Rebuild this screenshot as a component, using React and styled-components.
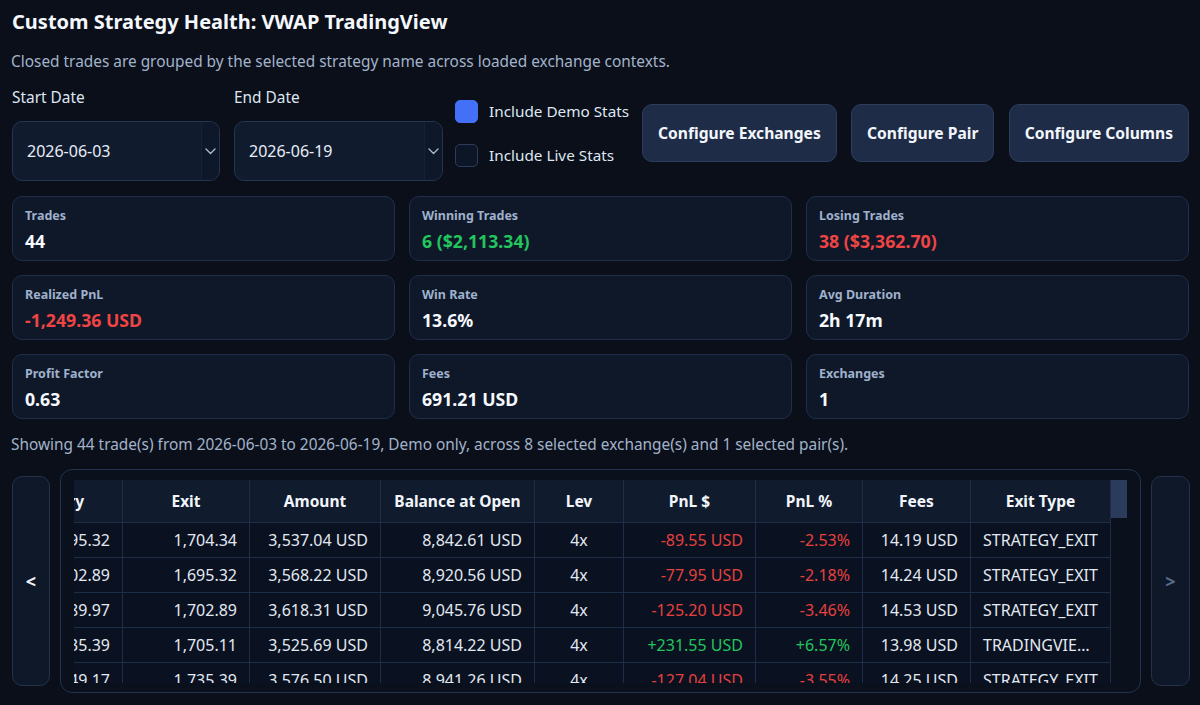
import React, { useEffect, useRef } from 'react';
import styled, { createGlobalStyle } from 'styled-components';

const GlobalStyle = createGlobalStyle`
  html, body { margin: 0; padding: 0; background: #0a0f1a; }
  body {
    font-family: "Noto Sans", "Open Sans", "Liberation Sans", sans-serif;
    color: #eef3fa;
  }
  * { box-sizing: border-box; }
`;

const Page = styled.div`
  padding: 8px 10px 12px 12px;
  display: flex;
  flex-direction: column;
`;

const Title = styled.h1`
  margin: 0;
  font-size: 20px;
  line-height: 28px;
  font-weight: 700;
  color: #f4f7fb;
`;

const Subtitle = styled.p`
  margin: 15px 0 0 -1px;
  font-size: 15.4px;
  line-height: 22px;
  color: #a3b3ca;
`;

const Controls = styled.div`
  margin: 14px 1px 0 0;
  display: flex;
  align-items: flex-start;
`;

const DateField = styled.div`
  width: ${p => p.$w}px;
  flex: none;
  margin-right: 14px;
  display: flex;
  flex-direction: column;
  gap: 12px;
`;

const FieldLabel = styled.span`
  font-size: 15.4px;
  line-height: 22px;
  color: #dfe7f2;
`;

const DateBox = styled.div`
  height: 60px;
  border: 1px solid #243552;
  border-radius: 10px;
  background: #111b2e;
  display: flex;
  align-items: stretch;
  overflow: hidden;
`;

const DateText = styled.span`
  flex: 1;
  display: flex;
  align-items: center;
  padding-left: 14px;
  font-size: 16px;
  color: #e8eef7;
`;

const PickerStrip = styled.span`
  width: 18px;
  display: flex;
  align-items: center;
  justify-content: center;
  background: #0e1829;
  border-left: 1px solid #15213a;
`;

const Checks = styled.div`
  flex: none;
  margin-top: 13px;
  margin-left: -2px;
  display: flex;
  flex-direction: column;
  gap: 21px;
  margin-right: 13px;
`;

const CheckRow = styled.label`
  display: flex;
  align-items: center;
  gap: 11px;
  font-size: 15.3px;
  line-height: 23px;
  white-space: nowrap;
  color: #dfe7f2;
`;

const Box = styled.span`
  width: 23px;
  height: 23px;
  flex: none;
  border-radius: 5px;
  border: 1px solid ${p => (p.$on ? '#4470f7' : '#2c3d5c')};
  background: ${p => (p.$on ? '#4470f7' : '#0d1627')};
`;

const Buttons = styled.div`
  margin-top: 17px;
  flex: 1;
  min-width: 0;
  display: flex;
  justify-content: space-between;
  gap: 12px;
`;

const ActionButton = styled.button`
  height: 58px;
  padding: 0 15px;
  border-radius: 10px;
  border: 1px solid #2c3d5e;
  background: #1f2c48;
  color: #f2f6fb;
  font-family: inherit;
  font-size: 15.6px;
  font-weight: 700;
  white-space: nowrap;
`;

const StatGrid = styled.div`
  margin: 15px 1px 0 0;
  display: grid;
  grid-template-columns: repeat(3, 1fr);
  gap: 14px;
`;

const StatCard = styled.div`
  border: 1px solid #1f2f4a;
  border-radius: 10px;
  background: #0f1829;
  padding: 10px 12px 7.5px;
  display: flex;
  flex-direction: column;
  gap: 3.5px;
`;

const StatLabel = styled.span`
  font-size: 12.5px;
  line-height: 18px;
  font-weight: 700;
  color: #9fb1cc;
`;

const toneColor = { pos: '#22c55e', neg: '#ef4444', plain: '#f6f9fd' };

const StatValue = styled.span`
  font-size: 17.7px;
  line-height: 24px;
  font-weight: 700;
  color: ${p => toneColor[p.$tone || 'plain']};
`;

const Status = styled.p`
  margin: 15px 0 0 -1px;
  font-size: 15.4px;
  line-height: 22px;
  color: #a3b3ca;
`;

const TableArea = styled.div`
  margin-top: 13px;
  display: flex;
  align-items: center;
  gap: 10px;
`;

const NavButton = styled.button`
  width: ${p => p.$w}px;
  height: 210px;
  flex: none;
  border-radius: 10px;
  border: 1px solid #22324d;
  background: #0f1829;
  color: ${p => (p.$dim ? '#5a6c89' : '#eef3fa')};
  font-family: inherit;
  font-size: 18px;
  font-weight: 700;
  padding: 0;
`;

const Frame = styled.div`
  flex: 1;
  min-width: 0;
  height: 224px;
  border: 1px solid #23334e;
  border-radius: 12px;
  background: #0a101c;
  padding: 10px 13px 9px;
  display: flex;
`;

const Scroller = styled.div`
  flex: 1;
  min-width: 0;
  height: 100%;
  overflow: hidden;
`;

const ScrollTrack = styled.div`
  width: 16px;
  flex: none;
  display: flex;
  flex-direction: column;
`;

const ScrollThumb = styled.div`
  height: 38px;
  background: #2a3b5c;
`;

const Table = styled.table`
  border-collapse: collapse;
  table-layout: fixed;
  font-size: 16px;
`;

const HeadCell = styled.th`
  height: 42px;
  padding: 0 12px;
  background: #101b2e;
  border: 1px solid #1f2e48;
  border-top: none;
  color: #f2f6fb;
  font-size: 15.5px;
  font-weight: 700;
  text-align: center;
  white-space: nowrap;
  overflow: hidden;
`;

const cellColor = { pos: '#22c55e', neg: '#e5413f', plain: '#e3e9f2' };

const Cell = styled.td`
  height: 35px;
  padding: 0 12px;
  background: #0a1120;
  border: 1px solid #1f2e48;
  color: ${p => cellColor[p.$tone || 'plain']};
  text-align: ${p => p.$align || 'right'};
  white-space: nowrap;
  overflow: hidden;
  text-overflow: ellipsis;
`;

const Chevron = () => (
  <svg width="11" height="7" viewBox="0 0 11 7" fill="none">
    <path d="M1 1l4.5 4.5L10 1" stroke="#aab8cc" strokeWidth="1.4" strokeLinecap="round" strokeLinejoin="round" />
  </svg>
);

const stats = [
  { label: 'Trades', value: '44' },
  { label: 'Winning Trades', value: '6 ($2,113.34)', tone: 'pos' },
  { label: 'Losing Trades', value: '38 ($3,362.70)', tone: 'neg' },
  { label: 'Realized PnL', value: '-1,249.36 USD', tone: 'neg' },
  { label: 'Win Rate', value: '13.6%' },
  { label: 'Avg Duration', value: '2h 17m' },
  { label: 'Profit Factor', value: '0.63' },
  { label: 'Fees', value: '691.21 USD' },
  { label: 'Exchanges', value: '1' },
];

const columns = [
  { key: 'closed', label: 'Closed At', w: 170, align: 'left' },
  { key: 'exchange', label: 'Exchange', w: 130, align: 'left' },
  { key: 'pair', label: 'Pair', w: 110, align: 'left' },
  { key: 'side', label: 'Side', w: 80, align: 'center' },
  { key: 'entry', label: 'Entry', w: 118 },
  { key: 'exit', label: 'Exit', w: 127 },
  { key: 'amount', label: 'Amount', w: 131 },
  { key: 'balance', label: 'Balance at Open', w: 154 },
  { key: 'lev', label: 'Lev', w: 89, align: 'center' },
  { key: 'pnl', label: 'PnL $', w: 132, tone: true },
  { key: 'pct', label: 'PnL %', w: 107, tone: true },
  { key: 'fees', label: 'Fees', w: 108 },
  { key: 'type', label: 'Exit Type', w: 140, align: 'left' },
];

const tableWidth = columns.reduce((sum, c) => sum + c.w, 0);

const rows = [
  ['2026-06-19 14:05', 'Bybit Demo', 'ETHUSDT', 'Long', '1,695.32', '1,704.34', '3,537.04 USD', '8,842.61 USD', '4x', '-89.55 USD', '-2.53%', '14.19 USD', 'STRATEGY_EXIT'],
  ['2026-06-19 09:41', 'Bybit Demo', 'ETHUSDT', 'Short', '1,702.89', '1,695.32', '3,568.22 USD', '8,920.56 USD', '4x', '-77.95 USD', '-2.18%', '14.24 USD', 'STRATEGY_EXIT'],
  ['2026-06-18 21:17', 'Bybit Demo', 'ETHUSDT', 'Long', '1,689.97', '1,702.89', '3,618.31 USD', '9,045.76 USD', '4x', '-125.20 USD', '-3.46%', '14.53 USD', 'STRATEGY_EXIT'],
  ['2026-06-18 12:52', 'Bybit Demo', 'ETHUSDT', 'Short', '1,735.39', '1,705.11', '3,525.69 USD', '8,814.22 USD', '4x', '+231.55 USD', '+6.57%', '13.98 USD', 'TRADINGVIEW_SIGNAL_EXIT'],
  ['2026-06-17 18:30', 'Bybit Demo', 'ETHUSDT', 'Long', '1,749.17', '1,735.39', '3,576.50 USD', '8,941.26 USD', '4x', '-127.04 USD', '-3.55%', '14.25 USD', 'STRATEGY_EXIT'],
  ['2026-06-17 10:03', 'Bybit Demo', 'ETHUSDT', 'Short', '1,741.60', '1,749.17', '3,590.12 USD', '8,975.30 USD', '4x', '-62.48 USD', '-1.74%', '14.31 USD', 'STRATEGY_EXIT'],
];

const toneOf = v => (v.startsWith('+') ? 'pos' : v.startsWith('-') ? 'neg' : 'plain');

export default function App() {
  const scrollRef = useRef(null);

  useEffect(() => {
    // The grid opens scrolled to its last columns
    const el = scrollRef.current;
    if (el) el.scrollLeft = el.scrollWidth - el.clientWidth;
  }, []);

  return (
    <>
      <GlobalStyle />
      <Page>
        <Title>Custom Strategy Health: VWAP TradingView</Title>
        <Subtitle>Closed trades are grouped by the selected strategy name across loaded exchange contexts.</Subtitle>

        <Controls>
          <DateField $w={208}>
            <FieldLabel>Start Date</FieldLabel>
            <DateBox>
              <DateText>2026-06-03</DateText>
              <PickerStrip><Chevron /></PickerStrip>
            </DateBox>
          </DateField>
          <DateField $w={209}>
            <FieldLabel>End Date</FieldLabel>
            <DateBox>
              <DateText>2026-06-19</DateText>
              <PickerStrip><Chevron /></PickerStrip>
            </DateBox>
          </DateField>
          <Checks>
            <CheckRow><Box $on />Include Demo Stats</CheckRow>
            <CheckRow><Box />Include Live Stats</CheckRow>
          </Checks>
          <Buttons>
            <ActionButton>Configure Exchanges</ActionButton>
            <ActionButton>Configure Pair</ActionButton>
            <ActionButton>Configure Columns</ActionButton>
          </Buttons>
        </Controls>

        <StatGrid>
          {stats.map(s => (
            <StatCard key={s.label}>
              <StatLabel>{s.label}</StatLabel>
              <StatValue $tone={s.tone}>{s.value}</StatValue>
            </StatCard>
          ))}
        </StatGrid>

        <Status>
          Showing 44 trade(s) from 2026-06-03 to 2026-06-19, Demo only, across 8 selected exchange(s) and 1 selected pair(s).
        </Status>

        <TableArea>
          <NavButton $w={38}>&lt;</NavButton>
          <Frame>
            <Scroller ref={scrollRef}>
              <Table style={{ width: tableWidth }}>
                <colgroup>
                  {columns.map(c => <col key={c.key} style={{ width: c.w }} />)}
                </colgroup>
                <thead>
                  <tr>
                    {columns.map(c => <HeadCell key={c.key}>{c.label}</HeadCell>)}
                  </tr>
                </thead>
                <tbody>
                  {rows.map((r, i) => (
                    <tr key={i}>
                      {columns.map((c, j) => (
                        <Cell key={c.key} $align={c.align} $tone={c.tone ? toneOf(r[j]) : 'plain'}>
                          {r[j]}
                        </Cell>
                      ))}
                    </tr>
                  ))}
                </tbody>
              </Table>
            </Scroller>
            <ScrollTrack>
              <ScrollThumb />
            </ScrollTrack>
          </Frame>
          <NavButton $w={39} $dim>&gt;</NavButton>
        </TableArea>
      </Page>
    </>
  );
}
